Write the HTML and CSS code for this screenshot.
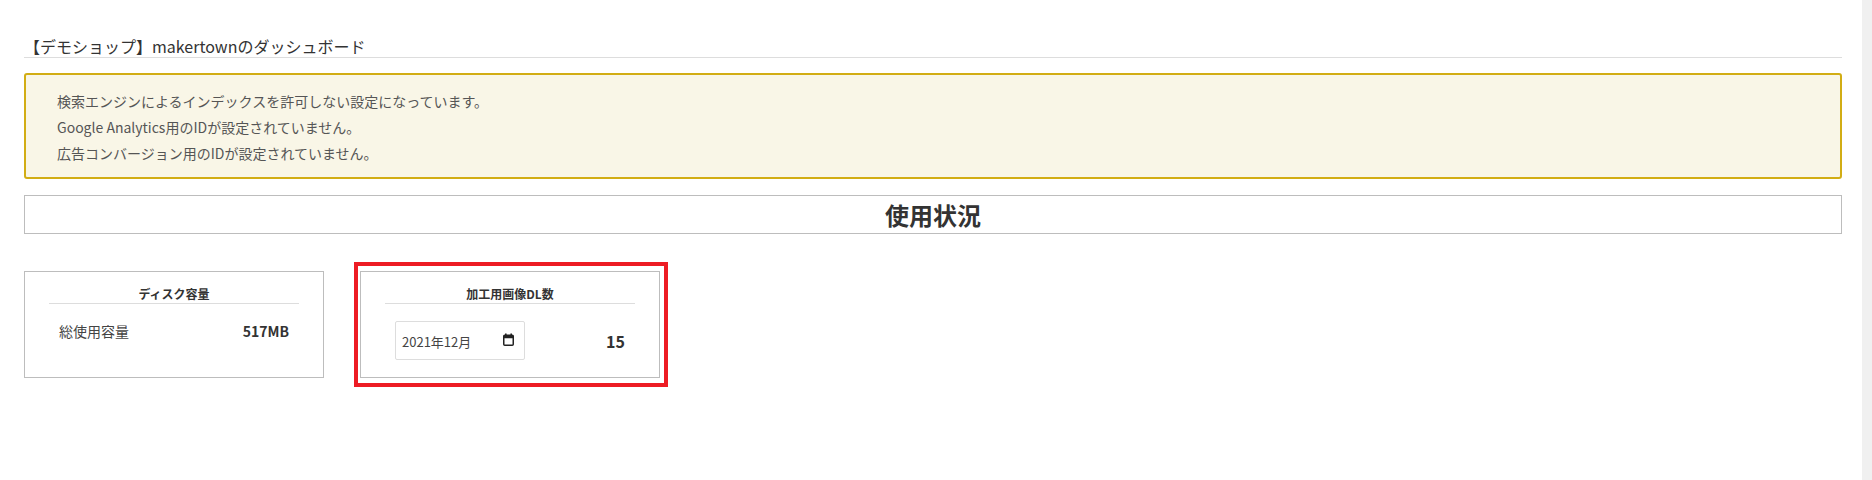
FILE: index.html
```html
<!DOCTYPE html>
<html lang="ja">
<head>
<meta charset="utf-8">
<title>ダッシュボード</title>
<link rel="stylesheet" href="styles.css">
</head>
<body>
<div class="page">
  <h1 class="page-title">【デモショップ】makertownのダッシュボード</h1>
  <div class="notice">
    <p class="notice-line">検索エンジンによるインデックスを許可しない設定になっています。</p>
    <p class="notice-line">Google Analytics用のIDが設定されていません。</p>
    <p class="notice-line">広告コンバージョン用のIDが設定されていません。</p>
  </div>
  <h2 class="section-title">使用状況</h2>
  <div class="cards">
    <div class="card">
      <div class="card-title">ディスク容量</div>
      <div class="card-row">
        <span class="row-label">総使用容量</span>
        <span class="row-value">517MB</span>
      </div>
    </div>
    <div class="card card-marked">
      <div class="card-title">加工用画像DL数</div>
      <div class="card-row">
        <div class="month-input">
          <span class="month-text">2021年12月</span>
          <svg class="cal-icon" width="11" height="13" viewBox="0 0 11 13">
            <rect x="0.75" y="2.25" width="9.5" height="10" rx="1" fill="none" stroke="#222" stroke-width="1.5"/>
            <rect x="0.75" y="2.25" width="9.5" height="3" fill="#222"/>
            <rect x="2" y="0.5" width="1.6" height="2.5" fill="#222"/>
            <rect x="7.4" y="0.5" width="1.6" height="2.5" fill="#222"/>
          </svg>
        </div>
        <span class="row-count">15</span>
      </div>
      <div class="highlight"></div>
    </div>
  </div>
</div>
<div class="scroll-track"></div>
</body>
</html>
```

FILE: styles.css
```css
html, body {
  margin: 0;
  padding: 0;
  background: #ffffff;
  min-height: 100%;
}

body {
  font-family: "Noto Sans CJK JP", "Noto Sans", sans-serif;
  color: #333333;
}

.page {
  padding: 35px 30px 60px 24px;
}

.page-title {
  margin: 0;
  font-size: 16px;
  font-weight: 400;
  line-height: 22px;
  color: #333333;
  border-bottom: 1px solid #dddddd;
}

.notice {
  margin-top: 15px;
  border: 2px solid #d2ad14;
  border-radius: 3px;
  background: #f9f6e7;
  padding: 13px 31px 11px;
}

.notice-line {
  margin: 0;
  font-size: 14px;
  line-height: 26px;
  color: #555555;
}

.section-title {
  margin: 16px 0 0;
  border: 1px solid #bdbdbd;
  font-size: 24px;
  font-weight: 700;
  line-height: 37px;
  text-align: center;
  color: #333333;
}

.cards {
  margin-top: 37px;
  display: flex;
  gap: 36px;
}

.card {
  position: relative;
  width: 300px;
  box-sizing: border-box;
  border: 1px solid #bdbdbd;
  padding: 13px 24px 17px;
}

.card-title {
  font-size: 12px;
  font-weight: 700;
  line-height: 18px;
  text-align: center;
  color: #333333;
  border-bottom: 1px solid #dddddd;
}

.card-row {
  margin-top: 17px;
  padding: 0 10px;
  display: flex;
  justify-content: space-between;
  align-items: center;
}

.row-label {
  font-size: 14px;
  line-height: 21px;
  color: #444444;
}

.row-value {
  font-size: 14px;
  font-weight: 700;
  line-height: 21px;
  color: #333333;
}

.month-input {
  width: 130px;
  height: 39px;
  box-sizing: border-box;
  border: 1px solid #dddddd;
  border-radius: 2px;
  padding: 0 10px 0 6px;
  display: flex;
  align-items: center;
  justify-content: space-between;
}

.month-text {
  font-size: 13px;
  line-height: 18px;
  color: #444444;
  margin-top: 2px;
}

.cal-icon {
  display: block;
  margin-top: -2px;
}

.row-count {
  font-size: 16px;
  font-weight: 700;
  line-height: 22px;
  color: #333333;
}

.highlight {
  position: absolute;
  left: -7px;
  right: -9px;
  top: -10px;
  bottom: -10px;
  border: 4px solid #ed1c24;
  pointer-events: none;
}

.scroll-track {
  position: fixed;
  top: 0;
  right: 0;
  width: 10px;
  height: 100%;
  background: #f0f0f0;
}
```
